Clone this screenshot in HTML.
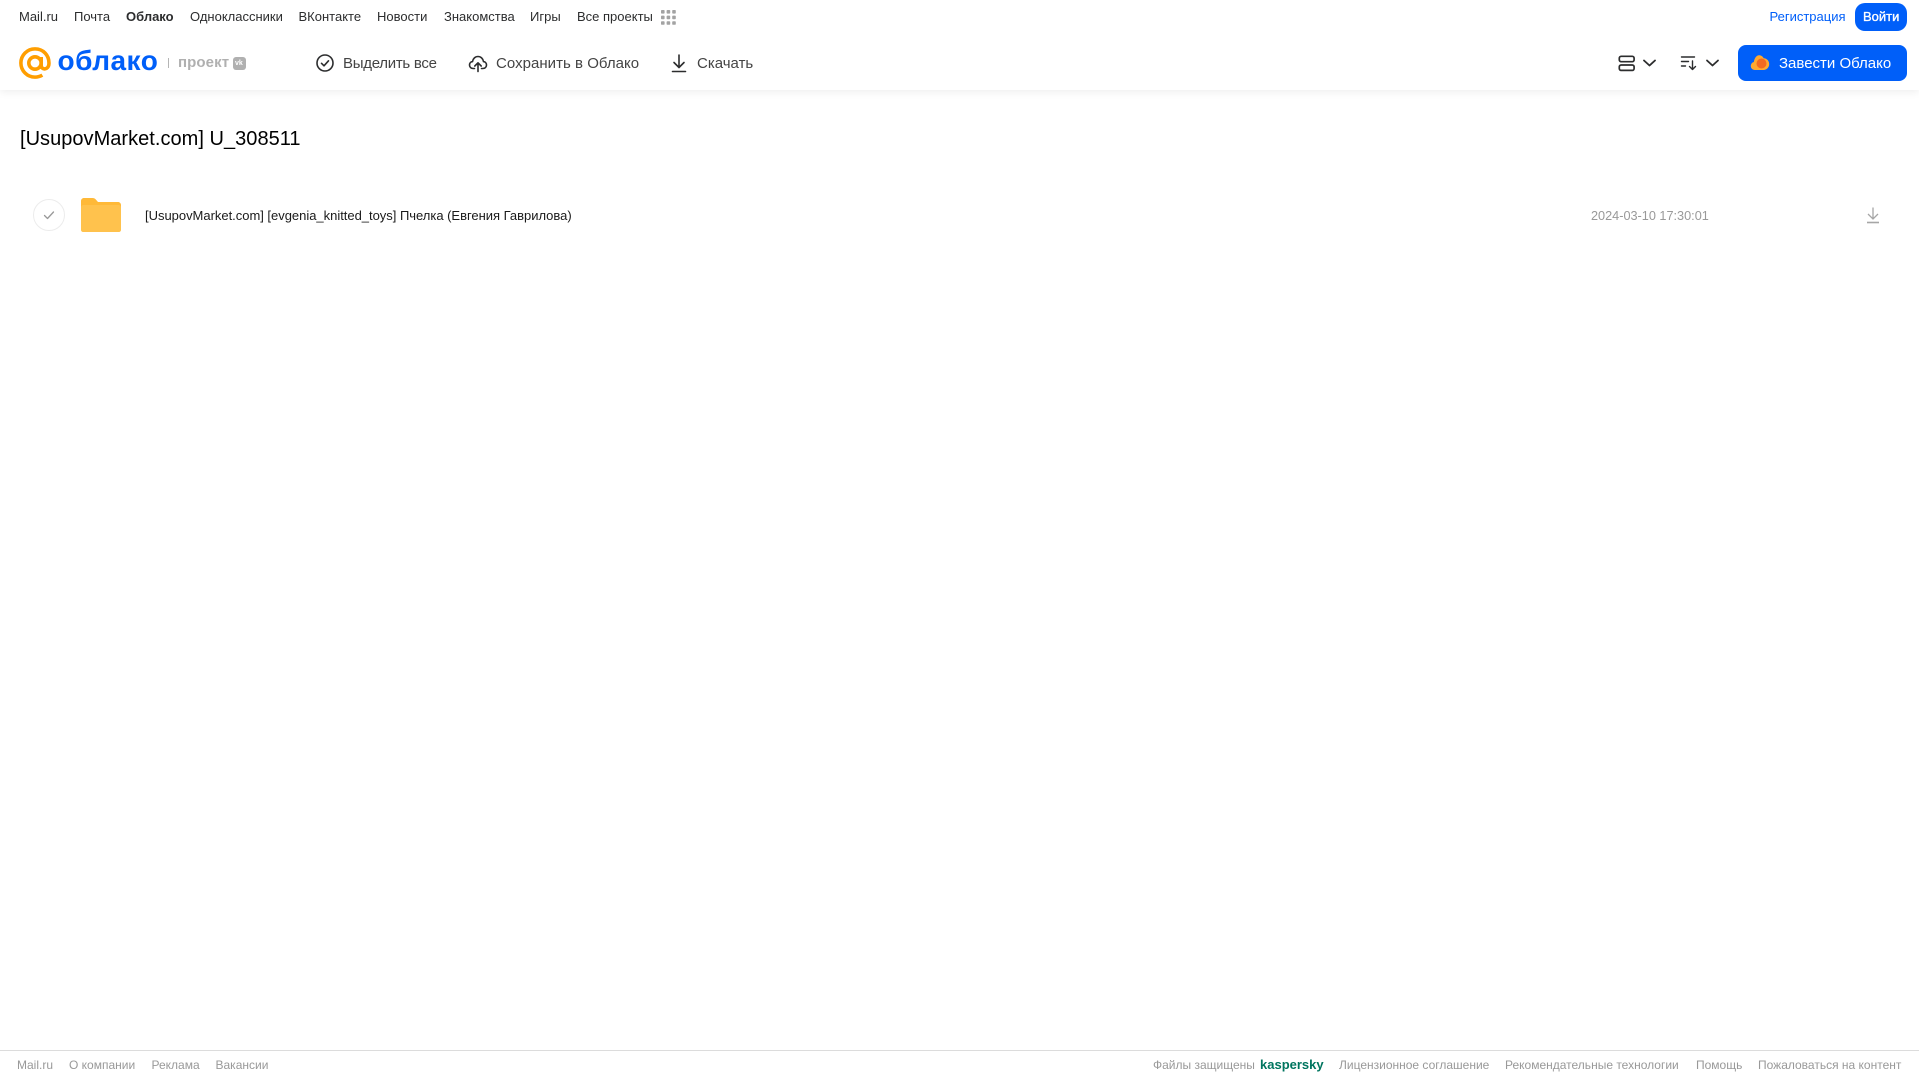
<!DOCTYPE html>
<html lang="ru">
<head>
<meta charset="utf-8">
<title>[UsupovMarket.com] U_308511</title>
<style>
html,body{margin:0;padding:0;background:#fff;width:1919px;height:1079px;overflow:hidden}
body{position:relative;font-family:"Liberation Sans",Arial,sans-serif;color:#2c2d2e}
span,svg,div{position:absolute}
span{white-space:nowrap}
a{color:inherit;text-decoration:none}
.n{top:9px;font-size:13px;line-height:16px;color:#2c2d2e}
.t{top:55px;font-size:15px;line-height:18px;color:#444}
.f{top:1058px;font-size:12px;line-height:14px;color:#999}
#hdr{left:0;top:0;width:1919px;height:90px;background:#fff;box-shadow:0 2px 8px rgba(0,0,0,.07)}
#ln{left:0;top:1050px;width:1919px;height:1px;background:#dcdcdc}
</style>
</head>
<body>
<div id="hdr"></div>

<span class="n" style="left:19px">Mail.ru</span>
<span class="n" style="left:74px">Почта</span>
<span class="n" style="left:126px;font-weight:bold">Облако</span>
<span class="n" style="left:190px">Одноклассники</span>
<span class="n" style="left:298.500px">ВКонтакте</span>
<span class="n" style="left:377px">Новости</span>
<span class="n" style="left:444px">Знакомства</span>
<span class="n" style="left:530px">Игры</span>
<span class="n" style="left:577px">Все проекты</span>
<svg style="left:661px;top:10px" width="15" height="15" viewBox="0 0 15 15" fill="#a3a3a3"><rect x="0" y="0" width="3.600" height="3.600" rx=".8"/><rect x="5.600" y="0" width="3.600" height="3.600" rx=".8"/><rect x="11.200" y="0" width="3.600" height="3.600" rx=".8"/><rect x="0" y="5.600" width="3.600" height="3.600" rx=".8"/><rect x="5.600" y="5.600" width="3.600" height="3.600" rx=".8"/><rect x="11.200" y="5.600" width="3.600" height="3.600" rx=".8"/><rect x="0" y="11.200" width="3.600" height="3.600" rx=".8"/><rect x="5.600" y="11.200" width="3.600" height="3.600" rx=".8"/><rect x="11.200" y="11.200" width="3.600" height="3.600" rx=".8"/></svg>

<span class="n" style="left:1769.500px;color:#005ff9">Регистрация</span>
<div style="left:1855px;top:3px;width:52px;height:28px;border-radius:10px;background:#005ff9"></div>
<span class="n" style="left:1863px;color:#fff;-webkit-text-stroke:.35px #fff">Войти</span>

<svg style="left:19px;top:47px" width="32" height="32" viewBox="0 0 34 34" fill="none" stroke="#ff9e00" stroke-width="3.800"><circle cx="17" cy="17" r="6.600"/><path d="M23.600 10.600V19.500c0 5.400 7.900 5.200 8.200-1.600C32.300 8.600 25.600 2 17 2 8.700 2 2 8.700 2 17s6.700 15 15 15c3 0 5.600-.8 7.800-2.100"/></svg>
<span style="left:57.500px;top:43px;font-size:28px;line-height:36px;color:#005ff9;font-weight:bold;letter-spacing:.5px">облако</span>
<div style="left:168px;top:58px;width:1px;height:10px;background:#b5b5b5"></div>
<span style="left:178px;top:54px;font-size:15px;line-height:18px;color:#b0b0b0;font-weight:bold;letter-spacing:.1px">проект</span>
<div style="left:233px;top:57px;width:13px;height:13px;border-radius:3px;background:#b0b0b0"></div>
<span style="left:235px;top:59px;font-size:7px;line-height:9px;color:#fff;font-weight:bold">vk</span>

<svg style="left:315px;top:53px" width="20" height="20" viewBox="0 0 20 20" fill="none" stroke="#2c2d2e" stroke-width="1.600"><circle cx="10" cy="10" r="8"/><path d="M6.500 10.300l2.500 2.500 4.500-5" stroke-linecap="round" stroke-linejoin="round"/></svg>
<span class="t" style="left:343px;letter-spacing:-.28px">Выделить все</span>
<svg style="left:468px;top:53px" width="20" height="20" viewBox="0 0 20 20" fill="none" stroke="#2c2d2e" stroke-width="1.600" stroke-linecap="round" stroke-linejoin="round"><path d="M6.500 15.500H5.200C3 15.500 1.500 14 1.500 12c0-1.800 1.300-3.200 3-3.400C5 5.500 7.300 3.500 10 3.500s5 2 5.500 5.100c1.700.2 3 1.600 3 3.400 0 2-1.500 3.500-3.700 3.500h-1.300"/><path d="M10 18.500V10M6.800 13l3.200-3.200 3.200 3.200"/></svg>
<span class="t" style="left:496px;letter-spacing:.03px">Сохранить в Облако</span>
<svg style="left:670px;top:53px" width="18" height="20" viewBox="0 0 18 20" fill="none" stroke="#2c2d2e" stroke-width="1.600" stroke-linecap="round" stroke-linejoin="round"><path d="M9 2v12M4 9.500L9 14.500l5-5M2.500 18.500h13"/></svg>
<span class="t" style="left:697px">Скачать</span>

<svg style="left:1617.500px;top:55px" width="18" height="17" viewBox="0 0 18 17" fill="none" stroke="#2c2d2e" stroke-width="1.700"><rect x="1.300" y="1.300" width="14.800" height="5.400" rx="1.800"/><rect x="1.300" y="10" width="14.800" height="5.400" rx="1.800"/></svg>
<svg style="left:1642px;top:58px" width="15" height="10" viewBox="0 0 15 10" fill="none" stroke="#2c2d2e" stroke-width="1.800" stroke-linecap="round" stroke-linejoin="round"><path d="M2 2.500l5.500 5 5.500-5"/></svg>
<svg style="left:1680px;top:55px" width="18" height="16" viewBox="0 0 18 16" fill="none" stroke="#2c2d2e" stroke-width="1.400" stroke-linecap="round" stroke-linejoin="round"><path d="M1.500 2h13M1.500 6.500h7M1.500 11h4M12.500 6v8.500M9.500 11.500l3 3 3-3"/></svg>
<svg style="left:1704.500px;top:58px" width="15" height="10" viewBox="0 0 15 10" fill="none" stroke="#2c2d2e" stroke-width="1.800" stroke-linecap="round" stroke-linejoin="round"><path d="M2 2.500l5.500 5 5.500-5"/></svg>

<div style="left:1738px;top:45px;width:169px;height:36px;border-radius:8px;background:#005ff9"></div>
<svg style="left:1750px;top:54px" width="20" height="17" viewBox="0 0 20 17"><path d="M5 16C2.300 16 .8 14 .8 12c0-2 1.300-3.600 3-4C4.500 4 6.500 1.200 9 1.200c2.300 0 3.800 1.300 4.700 3 3.200.2 5.500 2.700 5.500 5.800 0 3.300-2.500 6-5.700 6z" fill="#ffa930"/><circle cx="11.500" cy="9.500" r="5" fill="#f26a22"/></svg>
<span class="t" style="left:1779px;color:#fff">Завести Облако</span>

<span style="left:20px;top:125.500px;font-size:20px;line-height:26px;color:#000;letter-spacing:.03px">[UsupovMarket.com] U_308511</span>

<div style="left:33px;top:199px;width:30px;height:30px;border-radius:50%;border:1px solid #ececec"></div>
<svg style="left:42px;top:208px" width="14" height="14" viewBox="0 0 14 14" fill="none" stroke="#999" stroke-width="1.300" stroke-linecap="round" stroke-linejoin="round"><path d="M2.500 7.500l3 3 6-6.500"/></svg>
<svg style="left:81px;top:198px" width="40" height="34" viewBox="0 0 40 34"><path d="M0 3C0 1.300 1.300 0 3 0h8.500c1.500 0 2.500.6 3.300 1.500L17 4h20c1.700 0 3 1.300 3 3v4H0z" fill="#ffb938"/><path d="M0 9.500C0 8.100 1.100 7 2.500 7h35C38.900 7 40 8.100 40 9.500V32c0 1.100-.9 2-2 2H2c-1.100 0-2-.9-2-2z" fill="#ffc24d"/></svg>
<span style="left:145px;top:208px;font-size:13px;line-height:16px;color:#1a1a1a;letter-spacing:-.02px">[UsupovMarket.com] [evgenia_knitted_toys] Пчелка (Евгения Гаврилова)</span>
<span style="left:1591px;top:208.500px;font-size:12.700px;line-height:15px;color:#999">2024-03-10 17:30:01</span>
<svg style="left:1865px;top:206px" width="16" height="18" viewBox="0 0 16 18" fill="none" stroke="#a6a6a6" stroke-width="1.300"><path d="M8 1.500v11M3 8l5 5 5-5"/><path d="M2 16.500h12" stroke-width="1.600"/></svg>

<div id="ln"></div>
<span class="f" style="left:17px">Mail.ru</span>
<span class="f" style="left:69px">О компании</span>
<span class="f" style="left:151.500px">Реклама</span>
<span class="f" style="left:215.500px">Вакансии</span>
<span class="f" style="left:1153px">Файлы защищены</span>
<span class="f" style="left:1260px;color:#00755f;font-weight:bold;font-size:13px">kaspersky</span>
<span class="f" style="left:1339px">Лицензионное соглашение</span>
<span class="f" style="left:1505px">Рекомендательные технологии</span>
<span class="f" style="left:1696px">Помощь</span>
<span class="f" style="left:1758px">Пожаловаться на контент</span>
</body>
</html>
